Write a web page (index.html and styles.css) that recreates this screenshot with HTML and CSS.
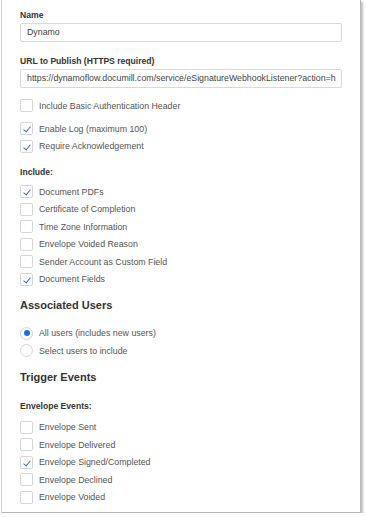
FILE: index.html
```html
<!DOCTYPE html>
<html>
<head>
<meta charset="utf-8">
<link rel="stylesheet" href="styles.css">
</head>
<body>
<div class="card">
  <div class="label l-name">Name</div>
  <div class="input">Dynamo</div>
  <div class="label l-url">URL to Publish (HTTPS required)</div>
  <div class="input">https://dynamoflow.documill.com/service/eSignatureWebhookListener?action=h</div>

  <div class="checks c-auth">
    <div class="check"><span class="box"></span><span>Include Basic Authentication Header</span></div>
  </div>
  <div class="checks c-log">
    <div class="check"><span class="box on"></span><span>Enable Log (maximum 100)</span></div>
    <div class="check"><span class="box on"></span><span>Require Acknowledgement</span></div>
  </div>

  <div class="label l-inc">Include:</div>
  <div class="checks">
    <div class="check"><span class="box on"></span><span>Document PDFs</span></div>
    <div class="check"><span class="box"></span><span>Certificate of Completion</span></div>
    <div class="check"><span class="box"></span><span>Time Zone Information</span></div>
    <div class="check"><span class="box"></span><span>Envelope Voided Reason</span></div>
    <div class="check"><span class="box"></span><span>Sender Account as Custom Field</span></div>
    <div class="check"><span class="box on"></span><span>Document Fields</span></div>
  </div>

  <div class="heading h-assoc">Associated Users</div>
  <div class="checks radios">
    <div class="check"><span class="radio on"></span><span>All users (includes new users)</span></div>
    <div class="check"><span class="radio"></span><span>Select users to include</span></div>
  </div>

  <div class="heading h-trig">Trigger Events</div>
  <div class="label l-env">Envelope Events:</div>
  <div class="checks">
    <div class="check"><span class="box"></span><span>Envelope Sent</span></div>
    <div class="check"><span class="box"></span><span>Envelope Delivered</span></div>
    <div class="check"><span class="box on"></span><span>Envelope Signed/Completed</span></div>
    <div class="check"><span class="box"></span><span>Envelope Declined</span></div>
    <div class="check"><span class="box"></span><span>Envelope Voided</span></div>
  </div>
</div>
</body>
</html>
```

FILE: styles.css
```css
html, body {
  margin: 0;
  padding: 0;
  background: #fff;
}
body {
  font-family: "Liberation Sans", Arial, sans-serif;
  color: #555;
}
.card {
  margin-left: 1px;
  width: 360px;
  height: 513px;
  box-sizing: border-box;
  border-left: 1px solid #d0d0d0;
  border-right: 1px solid #b8b8b8;
  border-bottom: 1px solid #b8b8b8;
  box-shadow: 2px 2px 2px rgba(0,0,0,0.25);
  padding: 9px 18px 0 18px;
  display: flex;
  flex-direction: column;
}
.label {
  font-size: 8.6px;
  font-weight: bold;
  color: #333;
  line-height: 12px;
  height: 12px;
}
.l-name { margin-bottom: 2px; }
.l-url { margin-top: 12.5px; margin-bottom: 2.5px; }
.l-inc { margin-top: 13.2px; margin-bottom: 7.8px; }
.l-env { margin-top: 16px; margin-bottom: 9px; }
.input {
  height: 19px;
  box-sizing: border-box;
  border: 1px solid #d9d9d9;
  border-radius: 2px;
  font-size: 8.8px;
  line-height: 17px;
  padding-left: 6px;
  color: #444;
  white-space: nowrap;
  overflow: hidden;
}
.checks {
  display: flex;
  flex-direction: column;
  gap: 4.5px;
}
.c-auth { margin-top: 11px; }
.c-log { margin-top: 10px; }
.check {
  display: flex;
  align-items: center;
  gap: 6px;
  height: 13px;
  font-size: 8.8px;
}
.box {
  width: 13px;
  height: 13px;
  box-sizing: border-box;
  border: 1px solid #d6d6d6;
  border-radius: 2px;
  flex: none;
  position: relative;
  background: #fff;
}
.box.on::after {
  content: "";
  position: absolute;
  left: 4px;
  top: 2px;
  width: 3px;
  height: 6px;
  border-right: 1.5px solid #2b6fd6;
  border-bottom: 1.5px solid #2b6fd6;
  transform: rotate(40deg);
}
.radio {
  width: 13px;
  height: 13px;
  box-sizing: border-box;
  border: 1px solid #d6d6d6;
  border-radius: 50%;
  flex: none;
  position: relative;
}
.radio.on::after {
  content: "";
  position: absolute;
  left: 2.5px;
  top: 2.5px;
  width: 6px;
  height: 6px;
  border-radius: 50%;
  background: #1a6ee8;
}
.heading {
  font-size: 11px;
  font-weight: bold;
  color: #333;
  line-height: 14px;
  height: 14px;
}
.h-assoc { margin-top: 11.7px; margin-bottom: 15.3px; }
.h-trig { margin-top: 12.5px; }
```
